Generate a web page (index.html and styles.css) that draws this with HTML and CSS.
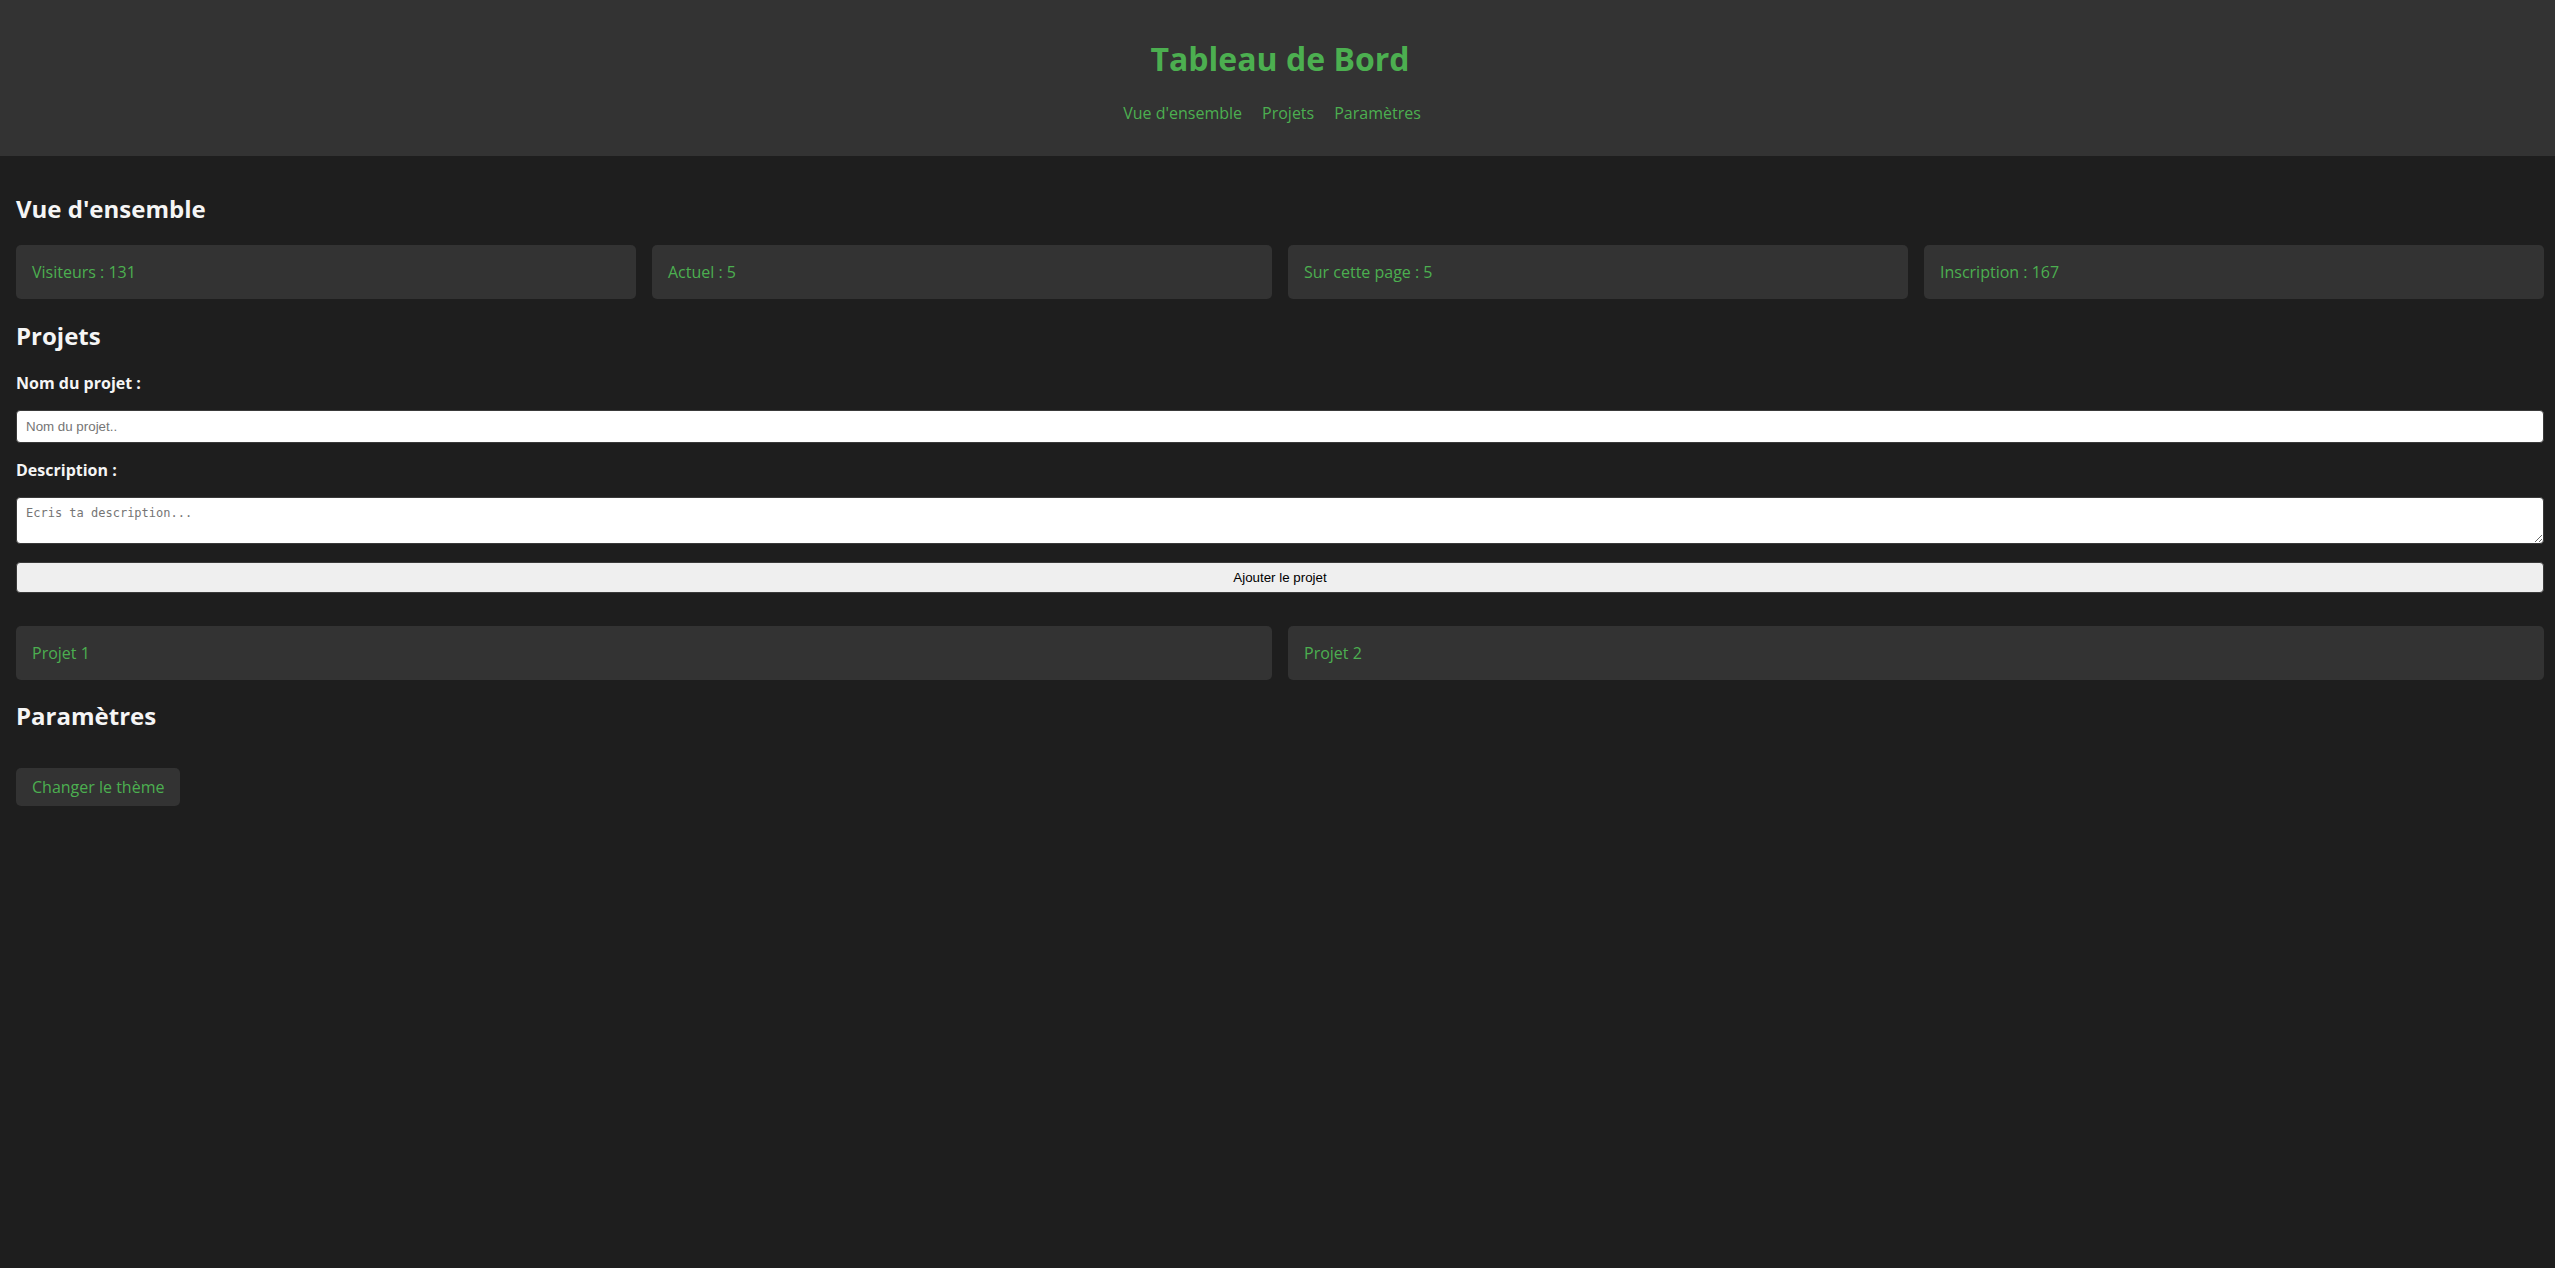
FILE: index.html
```html
<!DOCTYPE html>
<html lang="fr">
<head>
<meta charset="utf-8">
<title>Tableau de Bord</title>
<link rel="stylesheet" href="styles.css">
</head>
<body>
<header class="site-header">
  <h1 class="site-title">Tableau de Bord</h1>
  <nav>
    <ul class="nav-list">
      <li><a class="nav-link" href="#overview">Vue d'ensemble</a></li>
      <li><a class="nav-link" href="#projects">Projets</a></li>
      <li><a class="nav-link" href="#settings">Paramètres</a></li>
    </ul>
  </nav>
</header>
<main class="content">
  <section id="overview">
    <h2 class="section-title">Vue d'ensemble</h2>
    <div class="stats">
      <div class="card">Visiteurs : 131</div>
      <div class="card">Actuel : 5</div>
      <div class="card">Sur cette page : 5</div>
      <div class="card">Inscription : 167</div>
    </div>
  </section>
  <section id="projects">
    <h2 class="section-title">Projets</h2>
    <form class="project-form">
      <label class="field-label" for="pname">Nom du projet :</label>
      <input class="field-input" id="pname" type="text" placeholder="Nom du projet..">
      <label class="field-label" for="pdesc">Description :</label>
      <textarea class="field-textarea" id="pdesc" placeholder="Ecris ta description..."></textarea>
      <button class="submit-btn" type="button">Ajouter le projet</button>
    </form>
    <div class="project-list">
      <div class="card">Projet 1</div>
      <div class="card">Projet 2</div>
    </div>
  </section>
  <section id="settings">
    <h2 class="section-title">Paramètres</h2>
    <div class="settings-row">
      <button class="theme-btn" type="button">Changer le thème</button>
    </div>
  </section>
</main>
</body>
</html>
```
FILE: styles.css
```css
html, body {
  margin: 0;
  padding: 0;
  background: #1e1e1e;
  font-family: "Open Sans", "Liberation Sans", sans-serif;
  color: #f5f5f5;
}

.site-header {
  background: #333333;
  padding: 16px 11px 16px 16px;
  text-align: center;
}

.site-title {
  margin: 21.44px 0;
  font-size: 32px;
  font-weight: 700;
  color: #4caf50;
}

.nav-list {
  list-style: none;
  margin: 16px 0;
  padding: 0 16px 0 0;
  display: flex;
  justify-content: center;
  gap: 20px;
}

.nav-link {
  color: #4caf50;
  text-decoration: none;
  font-size: 16px;
}

.content {
  padding: 16px 11px 16px 16px;
}

.section-title {
  font-size: 24px;
  font-weight: 700;
  margin: 19.92px 0;
  color: #f5f5f5;
}

.stats {
  display: grid;
  grid-template-columns: repeat(4, 1fr);
  gap: 16px;
}

.card {
  background: #333333;
  color: #4caf50;
  padding: 16px;
  border-radius: 5px;
  font-size: 16px;
}

.project-form {
  display: flex;
  flex-direction: column;
}

.field-label {
  font-weight: 700;
  font-size: 16px;
  margin-bottom: 16px;
  color: #f5f5f5;
}

.field-input {
  box-sizing: border-box;
  width: 100%;
  height: 33px;
  padding: 8px 9px;
  border: 1px solid #3a3a3a;
  border-radius: 4px;
  background: #ffffff;
  font-family: "Liberation Sans", Arial, sans-serif;
  font-size: 13.33px;
  margin: 0 0 16px;
}

.field-textarea {
  box-sizing: border-box;
  width: 100%;
  height: 47px;
  padding: 8px 9px;
  border: 1px solid #3a3a3a;
  border-radius: 4px;
  background: #ffffff;
  font-family: "DejaVu Sans Mono", "Liberation Mono", monospace;
  font-size: 12px;
  margin: 0 0 18px;
  resize: vertical;
}

.field-input::placeholder,
.field-textarea::placeholder {
  color: #757575;
}

.submit-btn {
  box-sizing: border-box;
  width: 100%;
  height: 31px;
  background: #efefef;
  color: #000000;
  border: 1px solid #3a3a3a;
  border-radius: 4px;
  font-family: "Liberation Sans", Arial, sans-serif;
  font-size: 13.33px;
  cursor: pointer;
}

.project-list {
  display: grid;
  grid-template-columns: repeat(2, 1fr);
  gap: 16px;
  margin-top: 33px;
}

.settings-row {
  margin-top: 36px;
}

.theme-btn {
  background: #333333;
  color: #4caf50;
  border: none;
  border-radius: 5px;
  padding: 8px 16px;
  font-family: "Open Sans", "Liberation Sans", sans-serif;
  font-size: 16px;
  line-height: 22px;
  cursor: pointer;
}
```
